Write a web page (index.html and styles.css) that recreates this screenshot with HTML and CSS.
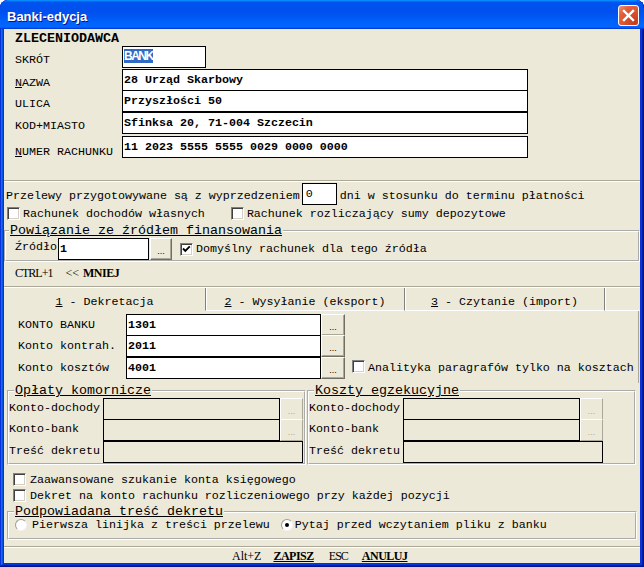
FILE: index.html
```html
<!DOCTYPE html>
<html lang="pl">
<head>
<meta charset="utf-8">
<title>Banki-edycja</title>
<link rel="stylesheet" href="styles.css">
</head>
<body>
<div class="window">
  <div class="titlebar">
    <span class="title">Banki-edycja</span>
    <span class="close"><svg width="19" height="19" viewBox="0 0 19 19"><path d="M5 5 L14 14 M14 5 L5 14" stroke="#fff" stroke-width="2.4" stroke-linecap="square" fill="none"/></svg></span>
  </div>
  <div class="client">
    <section class="payer">
      <div class="heading">ZLECENIODAWCA</div>
      <div class="frow"><span class="flabel">SKRÓT</span><span class="field short"><span class="sel">BANK</span></span></div>
      <div class="frow gap1"><span class="flabel"><u>N</u>AZWA</span><span class="field wide">28 Urząd Skarbowy</span></div>
      <div class="frow join"><span class="flabel">ULICA</span><span class="field wide">Przyszłości 50</span></div>
      <div class="frow"><span class="flabel">KOD+MIASTO</span><span class="field wide">Sfinksa 20, 71-004 Szczecin</span></div>
      <div class="frow gap2"><span class="flabel low"><u>N</u>UMER RACHUNKU</span><span class="field wide">11 2023 5555 5555 0029 0000 0000</span></div>
    </section>
    <div class="sep sep-payer"></div>
    <div class="days">
      <span class="days-text">Przelewy przygotowywane są z wyprzedzeniem</span>
      <span class="field days-field">0</span>
      <span class="days-text days-after">dni w stosunku do terminu płatności</span>
    </div>
    <div class="crow top-checks">
      <span class="cb"></span><span class="clabel">Rachunek dochodów własnych</span>
      <span class="cb cb-second"></span><span class="clabel">Rachunek rozliczający sumy depozytowe</span>
    </div>
    <fieldset class="group source">
      <legend>Powiązanie ze źródłem finansowania</legend>
      <div class="source-row">
        <span class="src-label">Źródło</span>
        <span class="field src-field">1</span>
        <span class="btn src-btn">...</span>
        <span class="cb src-cb"><svg width="11" height="11" viewBox="0 0 11 11"><path d="M2 4.5 L4.3 6.8 L8.8 2.3" stroke="#000" stroke-width="1.9" fill="none"/></svg></span>
        <span class="src-text">Domyślny rachunek dla tego źródła</span>
      </div>
    </fieldset>
    <div class="ctrl"><span class="ctrl-key">CTRL+1</span><span class="ctrl-arrows">&lt;&lt;</span><b class="ctrl-less">MNIEJ</b></div>
    <div class="sep sep-tabs"></div>
    <div class="tabs">
      <div class="tab tab1 active"><u>1</u> - Dekretacja</div>
      <div class="tab tab2"><u>2</u> - Wysyłanie (eksport)</div>
      <div class="tab tab3"><u>3</u> - Czytanie (import)</div>
      <div class="tab-fill"></div>
    </div>
    <div class="panel">
      <div class="prow"><span class="plabel">KONTO BANKU</span><span class="field pfield">1301</span><span class="btn pbtn">...</span></div>
      <div class="prow join"><span class="plabel">Konto kontrah.</span><span class="field pfield">2011</span><span class="btn pbtn">...</span></div>
      <div class="prow"><span class="plabel">Konto kosztów</span><span class="field pfield">4001</span><span class="btn pbtn">...</span><span class="cb p-cb"></span><span class="p-cbtext">Analityka paragrafów tylko na kosztach</span></div>
    </div>
    <div class="groups">
      <fieldset class="group sub sub1">
        <legend>Opłaty komornicze</legend>
        <div class="grow"><span class="glabel">Konto-dochody</span><span class="gfield"></span><span class="btn gbtn">...</span></div>
        <div class="grow join"><span class="glabel">Konto-bank</span><span class="gfield"></span><span class="btn gbtn">...</span></div>
        <div class="grow"><span class="glabel">Treść dekretu</span><span class="gfield full"></span></div>
      </fieldset>
      <fieldset class="group sub sub2">
        <legend>Koszty egzekucyjne</legend>
        <div class="grow"><span class="glabel">Konto-dochody</span><span class="gfield"></span><span class="btn gbtn">...</span></div>
        <div class="grow join"><span class="glabel">Konto-bank</span><span class="gfield"></span><span class="btn gbtn">...</span></div>
        <div class="grow"><span class="glabel">Treść dekretu</span><span class="gfield full"></span></div>
      </fieldset>
    </div>
    <div class="crow opt opt-first"><span class="cb"></span><span class="clabel opt-label">Zaawansowane szukanie konta księgowego</span></div>
    <div class="crow opt"><span class="cb"></span><span class="clabel opt-label">Dekret na konto rachunku rozliczeniowego przy każdej pozycji</span></div>
    <fieldset class="group hint">
      <legend>Podpowiadana treść dekretu</legend>
      <div class="radio-row">
        <span class="rb"></span><span class="rlabel">Pierwsza linijka z treści przelewu</span>
        <span class="rb on rb-second"></span><span class="rlabel rlabel-second">Pytaj przed wczytaniem pliku z banku</span>
      </div>
    </fieldset>
    <div class="sep sep-foot"></div>
    <div class="footer">
      <span class="fkey">Alt+Z</span><b class="fact save">ZAPISZ</b><span class="fkey esc">ESC</span><b class="fact cancel">ANULUJ</b>
    </div>
  </div>
</div>
</body>
</html>
```

FILE: styles.css
```css
* { box-sizing: border-box; }
html, body { margin: 0; padding: 0; background: #fff; }

.window {
  width: 644px;
  height: 567px;
  display: flex;
  flex-direction: column;
  background: #0831d9;
  border-radius: 8px 8px 0 0;
  overflow: hidden;
  box-shadow: inset -1px -1px #00138c, inset 1px 1px #0831d9, inset -2px -2px #001ea0, inset 2px 2px #166aee, inset -3px -3px #003bda, inset 3px 3px #0855dd;
}

.titlebar {
  flex: none;
  height: 29px;
  display: flex;
  align-items: flex-start;
  justify-content: space-between;
  padding: 0 5px 0 7px;
  border-radius: 8px 8px 0 0;
  background: linear-gradient(180deg, #0997ff, #0053ee 8%, #0050ee 40%, #0066ff 88%, #0066ff 93%, #005bff 95%, #003dd7 96%, #003dd7);
}
.title {
  margin-top: 9px;
  font: bold 13px/16px "Liberation Sans", Arial, sans-serif;
  color: #fff;
  text-shadow: 1px 1px #0f1089;
}
.close {
  margin-top: 5px;
  width: 21px;
  height: 21px;
  display: flex;
  border: 1px solid #fff;
  border-radius: 3px;
  background: radial-gradient(circle at 85% 85%, #c23b1e 0, #d9522f 45%, #e2603c 70%, #f0957a 100%);
}

.client {
  flex: 1;
  margin: 0 4px 4px;
  background: #ece9d8;
  display: flex;
  flex-direction: column;
  font: 11.67px/14px "Liberation Mono", "Courier New", monospace;
  color: #000;
  overflow: hidden;
}
.client > * { flex: none; }

/* generic */
.field {
  flex: none;
  height: 22px;
  border: 1px solid #000;
  background: #fff;
  padding-left: 1px;
  line-height: 20px;
  font-weight: bold;
  white-space: nowrap;
  overflow: hidden;
}
.sep {
  height: 2px;
  border-top: 1px solid #aca899;
  border-bottom: 1px solid #fff;
}
.cb {
  flex: none;
  width: 13px;
  height: 13px;
  display: flex;
  background: #fff;
  border: 1px solid;
  border-color: #808080 #fff #fff #808080;
  box-shadow: inset 1px 1px #404040, inset -1px -1px #d4d0c8;
}
.btn {
  flex: none;
  height: 22px;
  display: flex;
  justify-content: center;
  align-items: flex-end;
  padding-bottom: 3px;
  background: #ece9d8;
  border: 1px solid;
  border-color: #fff #716f64 #716f64 #fff;
  box-shadow: inset -1px -1px #aca899;
  font: 9px/9px "Liberation Sans", Arial, sans-serif;
  color: #000;
}
.group {
  margin: 0;
  padding: 0;
  min-width: 0;
  border: 2px groove #fff;
}
.group legend {
  padding: 0 1px;
  font-size: 13.33px;
  line-height: 14px;
  text-decoration: underline;
  white-space: nowrap;
}

/* payer section */
.payer { padding-left: 11px; }
.heading {
  margin-top: 3px;
  font-size: 13.33px;
  font-weight: bold;
  line-height: 14px;
}
.frow { display: flex; height: 22px; }
.frow.gap1 { margin-top: 1px; }
.frow.join { margin-top: -1px; }
.frow.gap2 { margin-top: 2px; }
.flabel { width: 107px; padding-top: 7px; white-space: nowrap; }
.flabel.low { padding-top: 9px; }
.field.short { width: 84px; }
.field.wide { width: 406px; }
.sel {
  font: bold 12px "Liberation Sans", Arial, sans-serif;
  letter-spacing: -1.5px;
  color: #fff;
  background: #316ac5;
}

.sep-payer { margin-top: 22px; }

/* days */
.days { display: flex; height: 22px; margin-top: 1px; padding-left: 2px; }
.days-text { padding-top: 6px; white-space: nowrap; }
.days-field { width: 35px; margin-left: 2px; padding-left: 3px; font-weight: normal; }
.days-after { margin-left: 3px; }

/* check rows */
.crow { display: flex; height: 16px; }
.crow .cb { margin-top: 2px; }
.clabel { padding-top: 2px; white-space: nowrap; margin-left: 3px; }
.top-checks { padding-left: 3px; }
.cb-second { margin-left: 26px; }

/* source group */
.source { margin-top: 3px; }
.source legend { margin-left: 3px; }
.source-row { display: flex; height: 22px; }
.src-label { margin-left: 9px; width: 43px; padding-top: 2px; white-space: nowrap; }
.src-field { width: 91px; }
.src-btn { width: 22px; margin-left: 1px; }
.src-cb { margin-left: 8px; margin-top: 5px; }
.src-text { margin-left: 3px; padding-top: 4px; white-space: nowrap; }

/* ctrl */
.ctrl {
  margin-top: 4px;
  padding-left: 11px;
  display: flex;
  font: 12px/14px "Liberation Serif", "Times New Roman", serif;
}
.ctrl-key { letter-spacing: -1px; }
.ctrl-arrows { margin-left: 13px; }
.ctrl-less { margin-left: 4px; letter-spacing: -0.5px; }
.sep-tabs { margin-top: 6px; }

/* tabs */
.tabs { display: flex; height: 23px; }
.tab {
  height: 23px;
  padding-top: 7px;
  line-height: 14px;
  text-align: center;
  white-space: nowrap;
  border-right: 1px solid #808080;
  border-bottom: 1px solid #fff;
}
.tab.active { border-bottom-color: transparent; }
.tab1 { width: 202px; }
.tab2 { width: 199px; box-shadow: inset 1px 0 #fff; }
.tab3 { width: 200px; box-shadow: inset 1px 0 #fff; }
.tab-fill { flex: 1; border-bottom: 1px solid #fff; box-shadow: inset 1px 0 #fff; }

/* panel */
.panel {
  padding: 3px 0 4px 14px;
  margin-right: 1px;
  border-right: 1px solid #aca899;
}
.prow { display: flex; height: 22px; }
.prow.join { margin-top: -1px; }
.plabel { width: 108px; padding-top: 4px; white-space: nowrap; }
.pfield { width: 195px; }
.pbtn { width: 24px; }
.p-cb { margin-left: 7px; margin-top: 3px; }
.p-cbtext { margin-left: 3px; padding-top: 4px; white-space: nowrap; }

/* sub groups */
.groups { display: flex; padding-left: 3px; margin-top: 1px; }
.sub legend { margin-left: 5px; }
.sub1 { width: 299px; margin-right: 1px; }
.sub2 { width: 329px; }
.grow { display: flex; height: 22px; }
.grow.join { margin-top: -1px; }
.glabel { width: 94px; padding-top: 3px; white-space: nowrap; }
.gfield {
  flex: none;
  width: 177px;
  height: 22px;
  border: 1px solid #000;
  background: #ece9d8;
}
.gfield.full { width: 200px; }
.gbtn {
  width: 23px;
  color: #aca899;
  border-color: #fff #aca899 #aca899 #fff;
  box-shadow: none;
}

/* options */
.opt { padding-left: 9px; }
.opt .cb { margin-top: 1px; }
.opt-first { margin-top: 7px; }
.opt-label { margin-left: 4px; padding-top: 1px; }

/* hint group */
.hint { width: 630px; margin-left: 3px; margin-top: 2px; }
.hint legend { margin-left: 5px; line-height: 12px; }
.radio-row { display: flex; height: 19px; margin-top: 1px; }
.rb {
  flex: none;
  width: 12px;
  height: 12px;
  margin-left: 6px;
  display: flex;
  align-items: center;
  justify-content: center;
  border-radius: 50%;
  background: #fff;
  border: 1px solid;
  border-color: #9d9d9d #f4f4f4 #f4f4f4 #9d9d9d;
}
.rb.on::after {
  content: "";
  width: 4px;
  height: 4px;
  border-radius: 50%;
  background: #000;
}
.rb-second { margin-left: 11px; }
.rlabel { margin-left: 5px; line-height: 12px; white-space: nowrap; }
.rlabel-second { margin-left: 2px; }

.sep-foot { margin-top: 6px; }

/* footer */
.footer {
  flex: 1;
  display: flex;
  padding: 1px 0 0 228px;
  font: 12px/14px "Liberation Serif", "Times New Roman", serif;
}
.fact { letter-spacing: -0.5px; text-decoration: underline; }
.save { margin-left: 12px; }
.esc { margin-left: 15px; letter-spacing: -1px; }
.cancel { margin-left: 14px; }
```
